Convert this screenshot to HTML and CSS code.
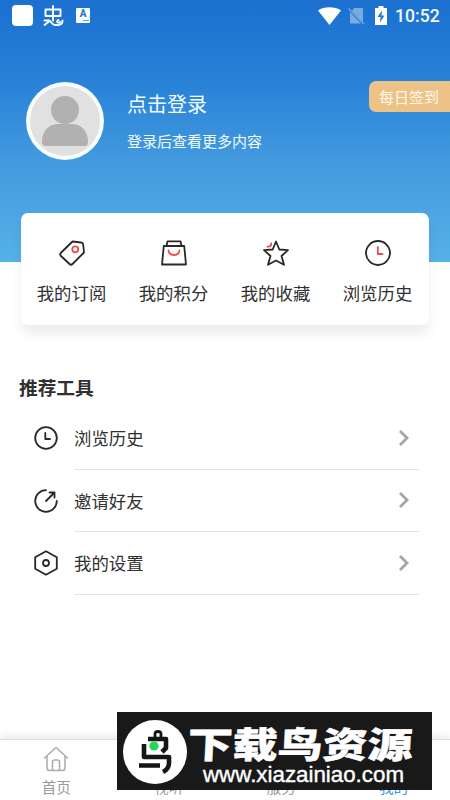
FILE: index.html
```html
<!DOCTYPE html>
<html lang="zh-CN">
<head>
<meta charset="utf-8">
<meta name="viewport" content="width=device-width, initial-scale=1">
<title>我的</title>
<link rel="stylesheet" href="styles.css">
</head>
<body>
<div class="app">
  <header class="hero">
    <div class="status">
      <span class="status-square"></span>
      <svg class="status-bug" width="21" height="22" viewBox="0 0 21 22" fill="none" stroke="#fff" stroke-width="1.900" stroke-linecap="round" stroke-linejoin="round"><path d="M2.500 4.500H17.500V11H2.500ZM10 1V15.500M1.500 15.500H6C8 15.500 8.500 20 12 20H15C18 20 19.500 18 19.500 15.500M15.500 15C12.500 16 15 19 17 17M1.500 20L6 16.500"/></svg>
      <span class="status-a"><b>A</b><i></i></span>
      <span class="status-space"></span>
      <svg width="23" height="18" viewBox="0 0 23 18"><path d="M0 3.500C6-.8 17-.8 23 3.500L11.500 18Z" fill="#fff"/></svg>
      <svg class="status-sim" width="17" height="18" viewBox="0 0 17 18"><path d="M6 1H15V15L4 4ZM2 5L13 16.500H2Z" fill="#78acdf"/><path d="M.5 1.500L16 17" stroke="#78acdf" stroke-width="1.300"/></svg>
      <svg class="status-battery" width="12" height="19" viewBox="0 0 12 19"><path d="M3.500 0H8.500V2H12V19H0V2H3.500Z" fill="#fff"/><path d="M7 4.500L2.500 11H5.500L5 16.500L9.500 9.500H6.500Z" fill="#247bd1"/></svg>
      <span class="status-time">10:52</span>
    </div>
    <div class="profile">
      <svg class="avatar" width="78" height="78" viewBox="0 0 78 78"><circle cx="39" cy="39" r="39" fill="#f6fdff"/><circle cx="39" cy="39" r="35" fill="#e1e1e1"/><circle cx="39" cy="28" r="14" fill="#b1b1b1"/><path d="M16 60V59C16 49 23 42 32 42H46C55 42 62 49 62 59V60Q62 64 58 64H20Q16 64 16 60Z" fill="#b1b1b1"/></svg>
      <div class="profile-text">
        <div class="login">点击登录</div>
        <div class="hint">登录后查看更多内容</div>
      </div>
      <div class="sign">每日签到</div>
    </div>
  </header>

  <section class="card">
    <div class="entry">
      <svg class="line-icon" width="28" height="28" viewBox="0 0 28 28"><path d="M14.500 2.500L23 3.500Q25 3.700 25.200 5.500L26 13.500L14.500 25Q13 26.500 11.500 25L3 17Q1.500 15.500 2.700 14Z"/><circle class="red" cx="17.300" cy="10.300" r="3"/></svg>
      <span>我的订阅</span>
    </div>
    <div class="entry">
      <svg class="line-icon" width="28" height="28" viewBox="0 0 28 28"><path d="M3.800 7H24.200L26 25.500H2ZM6.500 7L7.500 2.300H20.500L21.500 7"/><path class="red" d="M8.500 11.500C9.500 17.500 18.500 17.500 19.500 11.500"/></svg>
      <span>我的积分</span>
    </div>
    <div class="entry">
      <svg class="line-icon" width="28" height="28" viewBox="0 0 28 28"><path d="M14 2.500L17.300 10.500L26 11.200L19.500 17L22 25.800L14 21.500L6 25.800L8.500 17L2 11.200L10.700 10.500Z"/><path class="red" d="M5.500 7.700H6.500Q9.300 7.500 9.300 4.500"/></svg>
      <span>我的收藏</span>
    </div>
    <div class="entry">
      <svg class="line-icon" width="28" height="28" viewBox="0 0 28 28"><circle cx="14" cy="14" r="12"/><path class="red" d="M13.800 8V15H18.500"/></svg>
      <span>浏览历史</span>
    </div>
  </section>

  <h2 class="heading">推荐工具</h2>
  <div class="tools">
    <div class="tool">
      <svg class="line-icon" width="26" height="26" viewBox="0 0 26 26"><circle cx="13" cy="13" r="10.800"/><path d="M12.300 8V14H17"/></svg>
      <div class="tool-body"><span>浏览历史</span><svg class="chevron" width="12" height="18" viewBox="0 0 12 18"><path d="M2 2L9 9L2 16"/></svg></div>
    </div>
    <div class="tool">
      <svg class="line-icon" width="26" height="26" viewBox="0 0 26 26"><path d="M13 2.200A10.800 10.800 0 1 0 23.800 13M13 13L21.500 4.500M16.500 4.500H21.500V9.500"/></svg>
      <div class="tool-body"><span>邀请好友</span><svg class="chevron" width="12" height="18" viewBox="0 0 12 18"><path d="M2 2L9 9L2 16"/></svg></div>
    </div>
    <div class="tool">
      <svg class="line-icon" width="26" height="26" viewBox="0 0 26 26"><path d="M13 1.200L23.800 7.200V18.800L13 24.800L2.200 18.800V7.200Z"/><circle cx="13" cy="13" r="3"/></svg>
      <div class="tool-body"><span>我的设置</span><svg class="chevron" width="12" height="18" viewBox="0 0 12 18"><path d="M2 2L9 9L2 16"/></svg></div>
    </div>
  </div>

  <nav class="tabs">
    <div class="tab"><svg width="26" height="26" viewBox="0 0 26 26" fill="none" stroke="#aaa" stroke-width="1.500" stroke-linejoin="round" stroke-linecap="round"><path d="M1.500 12L13 1.500L24.500 12M4 10V22Q4 24.500 6.500 24.500H19.500Q22 24.500 22 22V10M9.500 24V16Q9.500 14 11.500 14H14.500Q16.500 14 16.500 16V24"/></svg><span>首页</span></div>
    <div class="tab"><span>视听</span></div>
    <div class="tab"><span>服务</span></div>
    <div class="tab active"><span>我的</span></div>
  </nav>

  <svg class="banner" width="315" height="78" viewBox="0 0 315 78">
    <rect width="315" height="78" fill="#191919"/>
    <circle cx="38" cy="40" r="32" fill="#fff"/>
    <g fill="none" stroke="#151515" stroke-width="4.600" stroke-linejoin="round">
      <path d="M38 25V22Q38 19.500 41 19.500T44 22V25" stroke-width="2.800"/>
      <path d="M31 27H49V36L45 40M27 32V45H52V51Q52 57 46 60M22 53.500H43"/>
    </g>
    <circle cx="37" cy="34" r="4.600" fill="#20d956"/>
    <text class="banner-name" transform="translate(70 46) skewX(-3) scale(1.250 1)" x="0" y="0" textLength="180" lengthAdjust="spacingAndGlyphs">下载鸟资源</text>
    <text class="banner-url" x="86" y="70" textLength="201" lengthAdjust="spacingAndGlyphs">www.xiazainiao.com</text>
  </svg>
</div>
</body>
</html>
```
FILE: styles.css
```css
* { box-sizing: border-box; }
body {
  margin: 0;
  background: #fff;
  color: #303030;
  font-family: "Noto Sans CJK SC", sans-serif;
}
svg { display: block; flex: none; }
.app {
  position: relative;
  display: flex;
  flex-direction: column;
  width: 450px;
  height: 800px;
  overflow: hidden;
}
.hero {
  flex: none;
  height: 262px;
  background: linear-gradient(#1b70d0, #2982d7 32%, #439ade 62%, #56b1e7);
  color: #f2fcff;
}
.status {
  display: flex;
  align-items: center;
  height: 31px;
  padding: 0 10px 0 12px;
}
.status-square {
  width: 21px;
  height: 21px;
  border-radius: 4px;
  background: #fff;
}
.status-bug { margin-left: 10px; }
.status-a {
  display: flex;
  flex-direction: column;
  align-items: center;
  width: 14px;
  height: 15px;
  margin-left: 12px;
  border-radius: 1px;
  background: #f4fbff;
  color: #286eb7;
  font: 10px/12px Roboto, sans-serif;
}
.status-a i {
  align-self: flex-end;
  width: 6px;
  height: 1px;
  margin-right: 1px;
  background: #6a9cce;
}
.status-space { flex: 1; }
.status-sim { margin-left: 7px; }
.status-battery { margin-left: 10px; }
.status-time {
  margin-left: 8px;
  width: 45px;
  font: 500 17.6px/24px Roboto, sans-serif;
  white-space: nowrap;
}
.profile {
  display: flex;
  align-items: flex-start;
  padding: 51px 0 0 26px;
}
.profile-text { margin: 7px 0 0 23px; }
.login { font-size: 20px; line-height: 30px; }
.hint { margin-top: 11px; font-size: 15px; line-height: 22px; }
.sign {
  width: 81px;
  height: 31px;
  margin: -1px 0 0 auto;
  padding-left: 10px;
  border-radius: 7px 0 0 7px;
  background: #edc287;
  color: #fff8e8;
  font-size: 15px;
  line-height: 31px;
}
.card {
  display: grid;
  grid-template-columns: repeat(4, 102px);
  flex: none;
  width: 408px;
  height: 112px;
  margin: -49px 0 0 20.5px;
  padding-top: 26px;
  border-radius: 7px;
  background: #fff;
  box-shadow: 0 9px 11px rgba(0, 0, 0, .07);
}
.entry {
  display: flex;
  flex-direction: column;
  align-items: center;
  gap: 13px;
  font-size: 17.4px;
  line-height: 26px;
}
.line-icon {
  fill: none;
  stroke: #292929;
  stroke-width: 1.8;
  stroke-linecap: round;
  stroke-linejoin: round;
}
.line-icon .red { stroke: #ed4c50; }
.heading {
  margin: 48px 0 0 19px;
  font-size: 18.7px;
  font-weight: 700;
  line-height: 28px;
}
.tools { padding: 6px 31px 0 33px; }
.tool {
  display: flex;
  align-items: center;
  gap: 15px;
  height: 62.5px;
}
.tool-body {
  display: flex;
  flex: 1;
  align-items: center;
  justify-content: space-between;
  height: 62.5px;
  padding-right: 9px;
  border-bottom: 1px solid #e3e3e3;
  font-size: 17.4px;
}
.chevron {
  fill: none;
  stroke: #a5a5a5;
  stroke-width: 2.8;
}
.tabs {
  display: grid;
  grid-template-columns: repeat(4, 1fr);
  height: 61px;
  margin-top: auto;
  border-top: 1px solid #dedede;
  background: #fff;
  box-shadow: 0 -3px 8px rgba(0, 0, 0, .09);
  color: #999;
  font-size: 14.5px;
  line-height: 20px;
}
.tab {
  display: flex;
  flex-direction: column;
  align-items: center;
  justify-content: flex-end;
  gap: 5px;
  padding-bottom: 3px;
}
.active { color: #3b9ddd; }
.banner {
  position: absolute;
  left: 117px;
  top: 712px;
}
.banner-name {
  fill: #fff;
  stroke: #fff;
  stroke-width: .5;
  font-size: 36px;
  font-weight: 900;
}
.banner-url {
  fill: #fff;
  stroke: #fff;
  stroke-width: .4;
  font-family: "Liberation Sans", sans-serif;
  font-size: 22.5px;
}
```
